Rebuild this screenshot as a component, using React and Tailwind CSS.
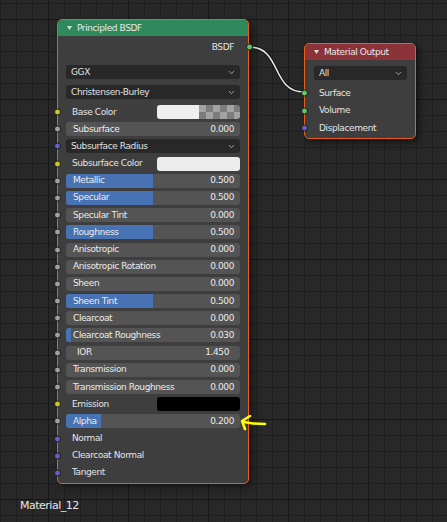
import { ChevronDown } from 'lucide-react';

const SOCK = {
  yellow: 'bg-[#c7c729]',
  gray: 'bg-[#a1a1a1]',
  purple: 'bg-[#6363c7]',
  green: 'bg-[#63c763]',
};

function Socket({ color, side = 'left' }) {
  return (
    <span
      className={`absolute top-1/2 -translate-y-1/2 size-[7px] rounded-full border border-[#1b1b1b] ${SOCK[color]} ${
        side === 'left' ? 'left-[-4.5px]' : 'right-[-4.5px]'
      }`}
    />
  );
}

function Triangle() {
  return (
    <svg width="5" height="4" viewBox="0 0 5 4" className="shrink-0">
      <polygon points="0,0 5,0 2.5,4" fill="#dcdcdc" />
    </svg>
  );
}

function Dropdown({ label }) {
  return (
    <div className="flex-1 h-full rounded-[3px] bg-[#282828] flex items-center justify-between pl-[5px] pr-[4px] text-[#e0e0e0]">
      <span>{label}</span>
      <ChevronDown size={9} strokeWidth={2} className="text-[#c8c8c8]" />
    </div>
  );
}

function Slider({ label, value }) {
  return (
    <div className="relative flex-1 h-full rounded-[3px] bg-[#545454] overflow-hidden">
      <div className="absolute left-0 top-0 bottom-0 bg-[#4772b3]" style={{ width: `${value * 100}%` }} />
      <div className="relative h-full flex items-center justify-between pl-[7px] pr-[6px] text-[#ebebeb]">
        <span>{label}</span>
        <span>{value.toFixed(3)}</span>
      </div>
    </div>
  );
}

function Row({ item }) {
  const { type, label, socket } = item;
  return (
    <div className="relative h-[14px] flex items-center px-[8px]">
      {socket && <Socket color={socket} />}
      {type === 'dropdown' && <Dropdown label={label} />}
      {type === 'slider' && <Slider label={label} value={item.value} />}
      {type === 'number' && (
        <div className="flex-1 h-full rounded-[3px] bg-[#545454] flex items-center justify-between pl-[11px] pr-[11px] text-[#ebebeb]">
          <span>{label}</span>
          <span>{item.value}</span>
        </div>
      )}
      {type === 'color' && (
        <>
          <span className="w-[91px] pl-[6px] text-[#e4e4e4]">{label}</span>
          <div className="flex-1 h-full rounded-[3px] overflow-hidden flex">
            {item.checker ? (
              <>
                <div className="flex-1 bg-[#efefef]" />
                <div className="flex-1 [background-image:repeating-conic-gradient(#7c7c7c_0_25%,#a3a3a3_0_50%)] [background-size:14px_14px]" />
              </>
            ) : (
              <div className={`flex-1 ${item.swatch}`} />
            )}
          </div>
        </>
      )}
      {type === 'plain' && <span className="pl-[6px] text-[#e4e4e4]">{label}</span>}
    </div>
  );
}

const inputs = [
  { type: 'color', label: 'Base Color', socket: 'yellow', checker: true },
  { type: 'slider', label: 'Subsurface', value: 0, socket: 'gray' },
  { type: 'dropdown', label: 'Subsurface Radius', socket: 'purple' },
  { type: 'color', label: 'Subsurface Color', socket: 'yellow', swatch: 'bg-[#ececec]' },
  { type: 'slider', label: 'Metallic', value: 0.5, socket: 'gray' },
  { type: 'slider', label: 'Specular', value: 0.5, socket: 'gray' },
  { type: 'slider', label: 'Specular Tint', value: 0, socket: 'gray' },
  { type: 'slider', label: 'Roughness', value: 0.5, socket: 'gray' },
  { type: 'slider', label: 'Anisotropic', value: 0, socket: 'gray' },
  { type: 'slider', label: 'Anisotropic Rotation', value: 0, socket: 'gray' },
  { type: 'slider', label: 'Sheen', value: 0, socket: 'gray' },
  { type: 'slider', label: 'Sheen Tint', value: 0.5, socket: 'gray' },
  { type: 'slider', label: 'Clearcoat', value: 0, socket: 'gray' },
  { type: 'slider', label: 'Clearcoat Roughness', value: 0.03, socket: 'gray' },
  { type: 'number', label: 'IOR', value: '1.450', socket: 'gray' },
  { type: 'slider', label: 'Transmission', value: 0, socket: 'gray' },
  { type: 'slider', label: 'Transmission Roughness', value: 0, socket: 'gray' },
  { type: 'color', label: 'Emission', socket: 'yellow', swatch: 'bg-black' },
  { type: 'slider', label: 'Alpha', value: 0.2, socket: 'gray' },
  { type: 'plain', label: 'Normal', socket: 'purple' },
  { type: 'plain', label: 'Clearcoat Normal', socket: 'purple' },
  { type: 'plain', label: 'Tangent', socket: 'purple' },
];

export default function App() {
  return (
    <div className="relative w-[447px] h-[522px] overflow-hidden bg-[#282828] font-['DejaVu_Sans',sans-serif] text-[9px] tracking-[-0.4px] leading-none [background-image:linear-gradient(90deg,#171717_1px,transparent_1px),linear-gradient(#171717_1px,transparent_1px),linear-gradient(90deg,#1f1f1f_1px,transparent_1px),linear-gradient(#1f1f1f_1px,transparent_1px)] [background-size:80px_80px,80px_80px,16px_16px,16px_16px] [background-position:48px_19px,48px_19px,0px_3px,0px_3px]">
      {/* link BSDF -> Surface */}
      <svg className="absolute inset-0" width="447" height="522">
        <path d="M249,47 C282,47 271,92 304,92" fill="none" stroke="#151515" strokeWidth="3.5" />
        <path d="M249,47 C282,47 271,92 304,92" fill="none" stroke="#e8e8e8" strokeWidth="1.6" />
      </svg>

      {/* Principled BSDF */}
      <div className="absolute left-[57px] top-[19px] w-[192px] rounded-[5px] border border-[#ea5f16] bg-[#3e3e3e] shadow-[3px_3px_7px_rgba(0,0,0,0.5)] pb-[3px]">
        <div className="h-[16px] rounded-t-[4px] bg-[#2e8a5d] flex items-center gap-[5px] pl-[9px] text-[#e8e8e8]">
          <Triangle />
          <span>Principled BSDF</span>
        </div>
        <div className="relative h-[14px] mt-[4px] flex items-center justify-end pr-[14px] text-[#e4e4e4]">
          <span>BSDF</span>
          <Socket color="green" side="right" />
        </div>
        <div className="flex flex-col gap-[6px] mt-[11px]">
          <Row item={{ type: 'dropdown', label: 'GGX' }} />
          <Row item={{ type: 'dropdown', label: 'Christensen-Burley' }} />
        </div>
        <div className="flex flex-col gap-[3.2px] mt-[6px]">
          {inputs.map((it) => (
            <Row key={it.label} item={it} />
          ))}
        </div>
      </div>

      {/* Material Output */}
      <div className="absolute left-[304px] top-[43px] w-[112px] rounded-[5px] border border-[#ea5f16] bg-[#3e3e3e] shadow-[3px_3px_7px_rgba(0,0,0,0.5)] pb-[3px]">
        <div className="h-[16px] rounded-t-[4px] bg-[#8b3339] flex items-center gap-[5px] pl-[9px] text-[#e8e8e8]">
          <Triangle />
          <span>Material Output</span>
        </div>
        <div className="h-[14px] mt-[6px] flex pl-[9px] pr-[8px]">
          <Dropdown label="All" />
        </div>
        <div className="flex flex-col gap-[3.5px] mt-[6px]">
          {[
            ['Surface', 'green'],
            ['Volume', 'green'],
            ['Displacement', 'purple'],
          ].map(([label, c]) => (
            <div key={label} className="relative h-[14px] flex items-center pl-[14px] text-[#e4e4e4]">
              <Socket color={c} />
              <span>{label}</span>
            </div>
          ))}
        </div>
      </div>

      {/* annotation arrow */}
      <svg className="absolute left-[236px] top-[410px]" width="34" height="24" viewBox="0 0 34 24">
        <path
          d="M29,14 L17,13.5 L8,12 M14,6 L6,11 L9,19"
          fill="none"
          stroke="#ffff00"
          strokeWidth="2.6"
          strokeLinecap="round"
          strokeLinejoin="round"
        />
      </svg>

      <div className="absolute left-[20px] top-[500px] text-[11px] tracking-[-0.5px] text-[#e6e6e6]">Material_12</div>
    </div>
  );
}
